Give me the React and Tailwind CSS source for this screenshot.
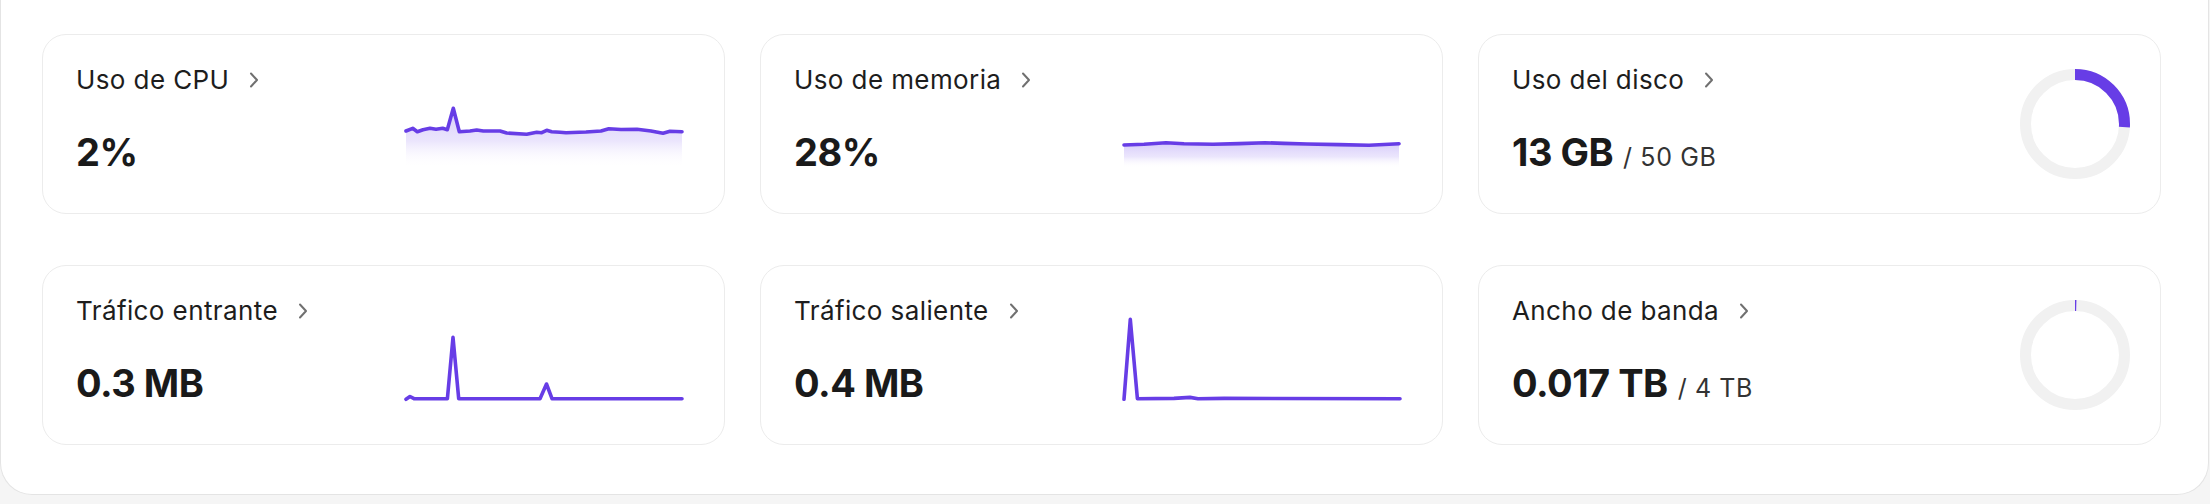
import React from "react";

const PURPLE = "#673de6";

const charts = {
  cpu: {
    fill: true,
    pts: [
      [0, 41], [6.7, 38.3], [11.3, 41.7], [17, 39.7], [24, 38.3], [30, 39.3], [36.7, 38.3], [41.3, 39.7],
      [47.3, 18.3], [53.3, 41.7], [64, 41], [70.7, 40], [77.3, 41], [94, 41], [100.7, 43], [120.7, 44.3],
      [130.7, 42.3], [135.7, 42.7], [140.7, 40.3], [145.7, 41.7], [154, 42.3], [160, 42.7], [180, 42],
      [195, 41], [202.8, 38.7], [215, 39.5], [231, 39.3], [245, 41], [257, 43.3], [264, 41.3], [276, 41.7],
    ],
  },
  mem: {
    fill: true,
    pts: [[0, 55], [20, 54.2], [42, 52.7], [60, 53.8], [89, 54.3], [115, 53.6], [141, 52.7], [160, 53.4], [183, 54], [215, 54.6], [245, 55.3], [275, 53.7]],
  },
  inb: {
    fill: false,
    pts: [[0, 78.3], [4, 75.5], [8, 77.7], [41.4, 77.7], [47, 16.3], [52.7, 77.7], [134, 77.7], [140.5, 63], [146, 77.7], [276, 77.7]],
  },
  outb: {
    fill: false,
    pts: [[0, 78.3], [6.3, -1.7], [13.4, 77.7], [50, 77.4], [66, 76.4], [74, 77.7], [100, 77.4], [276, 77.7]],
  },
};

function Sparkline({ id }) {
  const c = charts[id];
  const line = c.pts.map((p) => p.join(",")).join(" ");
  const area = `M${c.pts[0][0]},78 L` + c.pts.map((p) => p.join(",")).join(" L") + ` L${c.pts[c.pts.length - 1][0]},78 Z`;
  return (
    <svg width="277" height="86" viewBox="0 -6 277 86" className="mt-[49px] mr-[41px] shrink-0 overflow-visible">
      <defs>
        <linearGradient id={`g-${id}`} x1="0" y1="0" x2="0" y2="1">
          <stop offset="0%" stopColor="#d6cbfa" stopOpacity="1" />
          <stop offset="55%" stopColor="#e6dffc" stopOpacity="0.8" />
          <stop offset="100%" stopColor="#ffffff" stopOpacity="0" />
        </linearGradient>
      </defs>
      {c.fill && <path d={area} fill={`url(#g-${id})`} />}
      <polyline points={line} fill="none" stroke={PURPLE} strokeWidth="3.6" strokeLinejoin="round" strokeLinecap="round" />
    </svg>
  );
}

function Donut({ pct }) {
  const r = 49.5;
  const circ = 2 * Math.PI * r;
  const len = (circ * pct) / 100;
  return (
    <svg width="110" height="110" viewBox="0 0 110 110" className="self-center mr-[30px] shrink-0">
      <circle cx="55" cy="55" r={r} fill="none" stroke="#f1f1f1" strokeWidth="11" />
      <circle
        cx="55"
        cy="55"
        r={r}
        fill="none"
        stroke={PURPLE}
        strokeWidth="11"
        strokeDasharray={`${len} ${circ}`}
        transform="rotate(-90 55 55)"
      />
    </svg>
  );
}

function Chevron() {
  return (
    <svg width="10" height="16" viewBox="0 0 10 16" className="ml-[20px] shrink-0">
      <path d="M2 1.5 L8 8 L2 14.5" fill="none" stroke="#707070" strokeWidth="2" strokeLinecap="round" strokeLinejoin="round" />
    </svg>
  );
}

function Card({ title, value, total, right }) {
  return (
    <div className="flex h-[180px] rounded-[24px] border border-[#ececec] bg-white">
      <div className="flex flex-1 flex-col pl-[33px] pt-[29px]">
        <div className="flex items-center text-[26px] leading-[32px] tracking-[0.4px] text-[#1d1d1d]">
          <span>{title}</span>
          <Chevron />
        </div>
        <div className="mt-[33px] flex items-baseline leading-[46px] text-[#1a1a1a]">
          <span className="text-[38px] font-bold tracking-[-0.5px]">{value}</span>
          {total && <span className="ml-[10px] text-[25px] tracking-[0.6px] text-[#333333]">/ {total}</span>}
        </div>
      </div>
      {right}
    </div>
  );
}

export default function App() {
  return (
    <div className="h-[504px] w-[2210px] bg-[#f5f5f5]" style={{ fontFamily: "Inter, 'Noto Sans', sans-serif" }}>
      <div className="w-[2209px] rounded-b-[32px] border border-t-0 border-[#e4e4e4] bg-white pl-[41px] pr-[47px] pt-[34px] pb-[49px]">
        <div className="grid grid-cols-3 gap-x-[35px] gap-y-[51px]">
          <Card title="Uso de CPU" value="2%" right={<Sparkline id="cpu" />} />
          <Card title="Uso de memoria" value="28%" right={<Sparkline id="mem" />} />
          <Card title="Uso del disco" value="13 GB" total="50 GB" right={<Donut pct={26} />} />
          <Card title="Tráfico entrante" value="0.3 MB" right={<Sparkline id="inb" />} />
          <Card title="Tráfico saliente" value="0.4 MB" right={<Sparkline id="outb" />} />
          <Card title="Ancho de banda" value="0.017 TB" total="4 TB" right={<Donut pct={0.425} />} />
        </div>
      </div>
    </div>
  );
}
